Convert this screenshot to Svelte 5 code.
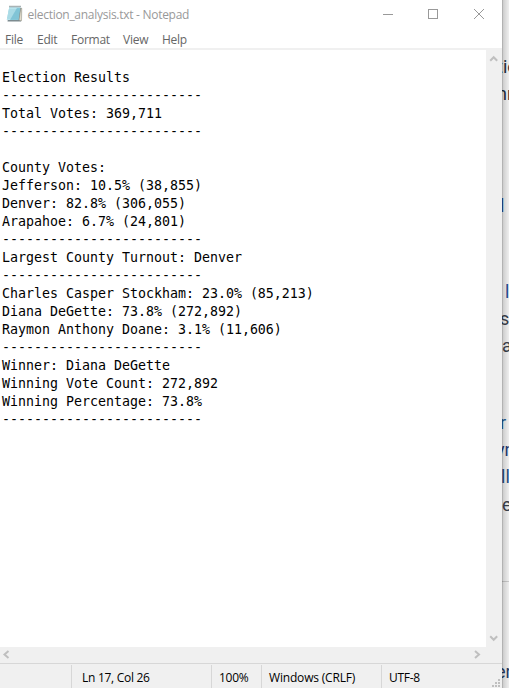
<script>
  const lines = [
    '', 'Election Results', '-------------------------', 'Total Votes: 369,711', '-------------------------', '',
    'County Votes:', 'Jefferson: 10.5% (38,855)', 'Denver: 82.8% (306,055)', 'Arapahoe: 6.7% (24,801)',
    '-------------------------', 'Largest County Turnout: Denver', '-------------------------',
    'Charles Casper Stockham: 23.0% (85,213)', 'Diana DeGette: 73.8% (272,892)', 'Raymon Anthony Doane: 3.1% (11,606)',
    '-------------------------', 'Winner: Diana DeGette', 'Winning Vote Count: 272,892', 'Winning Percentage: 73.8%',
    '-------------------------'
  ];
  const menus = ['File', 'Edit', 'Format', 'View', 'Help'];
  // Fragments of the page that peek out from beneath the window.
  const fragments = [
    { t: 'tio', x: -5, y: 56, c: '#27303f' },
    { t: 'nn', x: -5, y: 83, c: '#27303f' },
    { t: 'l', x: -2, y: 195, c: '#24509a' },
    { t: 'l', x: 3, y: 281, c: '#24509a' },
    { t: 's', x: -2, y: 308, c: '#3d4450' },
    { t: 'a', x: 0, y: 335, c: '#3d4450' },
    { t: 'r', x: -2, y: 412, c: '#24609a' },
    { t: 'yn', x: -6, y: 439, c: '#27407a' },
    { t: 'll', x: -1, y: 466, c: '#27508a' },
    { t: 'e', x: 0, y: 494, c: '#3d4450' },
    { t: 'er', x: -6, y: 661, c: '#27406a' }
  ];
</script>

<div class="screen">
  <main class="window">
    <header class="title">
      <svg class="icon" width="17" height="18" viewBox="0 0 17 18">
        <path d="M4 3h11.5L15 16.5H1.5z" fill="#7d8b90" />
        <path d="M3.2 2.5h11.3L12.8 15H.8z" fill="#86c8d9" />
        <path d="M3.2 2.5h8L4 15H.8z" fill="#b9e4ed" />
        <path d="M3 5h11M2.7 7h11M2.3 9h11M2 11h11M1.6 13h11" stroke="#6fb8cc" stroke-width=".4" />
        <path d="M13 15.3l1.8-12.3 1 .3-.3 12.6z" fill="#e2dccb" stroke="#77796f" stroke-width=".4" />
        <path d="M3.5 1.5h11.5" stroke="#53666b" stroke-width="1.6" stroke-dasharray="1 1" />
      </svg>
      <span class="name">election_analysis.txt - Notepad</span>
      <svg class="controls" width="100" height="28" viewBox="0 0 100 28" fill="none" stroke="#999">
        <path d="M0 14.5h10M45.5 9.5h9v9h-9z" shape-rendering="crispEdges" />
        <path d="M91 9l10 10M101 9L91 19" />
      </svg>
    </header>
    <nav>
      {#each menus as m}<span class={m.toLowerCase()}>{m}</span>{/each}
    </nav>
    <section class="editor">
      <pre>{lines.join('\n')}</pre>
      <div class="vbar">
        <svg width="16" height="16"><path d="M4.2 10.8L7.7 7.2l3.5 3.6" /></svg>
        <svg width="16" height="16"><path d="M4.2 5.2l3.5 3.6 3.5-3.6" /></svg>
      </div>
    </section>
    <div class="hbar">
      <svg width="16" height="16"><path d="M8.5 4L4.5 7.5l4 3.5" /></svg>
      <svg width="16" height="16"><path d="M5 4l4 3.5L5 11" /></svg>
    </div>
    <footer>
      <div class="blank"></div>
      <div class="pos"><span>Ln 17, Col 26</span></div>
      <div class="zoom"><span>100%</span></div>
      <div class="eol"><span>Windows (CRLF)</span></div>
      <div class="enc"><span>UTF-8</span></div>
      <svg class="grip" width="10" height="10" fill="#bfbfbf" shape-rendering="crispEdges">
        <path d="M6 0h2v2H6zM3 3h2v2H3zM6 3h2v2H6zM0 6h2v2H0zM3 6h2v2H3zM6 6h2v2H6z" />
      </svg>
    </footer>
  </main>
  <aside>
    {#each fragments as f}
      <span style="left:{f.x}px;top:{f.y}px;color:{f.c}">{f.t}</span>
    {/each}
    <hr />
  </aside>
</div>

<style>
  .screen { display: flex; width: 509px; height: 688px; overflow: hidden; background: #fff; font: 12px/16px "Open Sans", "Noto Sans", sans-serif; }
  .window { width: 502px; flex: none; display: flex; flex-direction: column; background: #fff; }
  .title { height: 30px; display: flex; align-items: flex-start; color: #999; }
  .icon { margin: 5px 0 0 6px; flex: none; }
  .name { margin: 7px 0 0 4.5px; width: 355.5px; white-space: nowrap; letter-spacing: -.28px; }
  .controls { overflow: visible; flex: none; }
  nav { height: 18px; display: flex; color: #666; border-bottom: 2px solid #f0f0f0; padding-left: 5px; }
  nav span { margin-top: 2px; white-space: nowrap; letter-spacing: -.25px; }
  .file { width: 32px; } .edit { width: 34px; } .format { width: 52px; } .view { width: 39px; }
  .editor { display: flex; height: 597px; }
  pre { flex: 1; margin: 0; padding: 1px 0 0 2px; color: #000; font: 13.29px/18px "DejaVu Sans Mono", monospace; overflow: hidden; }
  .vbar { width: 16px; background: #f0f0f0; display: flex; flex-direction: column; justify-content: space-between; }
  .vbar path, .hbar path { fill: none; stroke: #bfbfbf; stroke-width: 2; }
  .hbar { height: 16px; background: #f0f0f0; display: flex; justify-content: space-between; padding-right: 16px; }
  footer { height: 24px; border-top: 1px solid #d7d7d7; background: #f0f0f0; display: flex; position: relative; color: #000; }
  footer div { margin-top: 1px; box-sizing: border-box; border-right: 1px solid #d7d7d7; padding-top: 5px; white-space: nowrap; letter-spacing: -.28px; }
  .blank { width: 72px; } .pos { width: 140px; padding-left: 10px; } .zoom { width: 50px; padding-left: 7px; }
  .eol { width: 120px; padding-left: 7px; letter-spacing: -.18px; } .enc { flex: 1; padding-left: 7px; border: 0; }
  .grip { position: absolute; right: 0; bottom: -1px; }
  aside { width: 7px; flex: none; position: relative; overflow: hidden; font: 18px/22px Roboto, sans-serif; background: #fff; }
  aside::after { content: ''; position: absolute; inset: 0; background: linear-gradient(90deg, #0006, #0003 1px, #00000026 3px, #00000010 7px); }
  aside span { position: absolute; white-space: nowrap; }
  hr { position: absolute; top: 581px; left: 0; width: 7px; margin: 0; border: 0; height: 1px; background: #d5d5d5; }
</style>
